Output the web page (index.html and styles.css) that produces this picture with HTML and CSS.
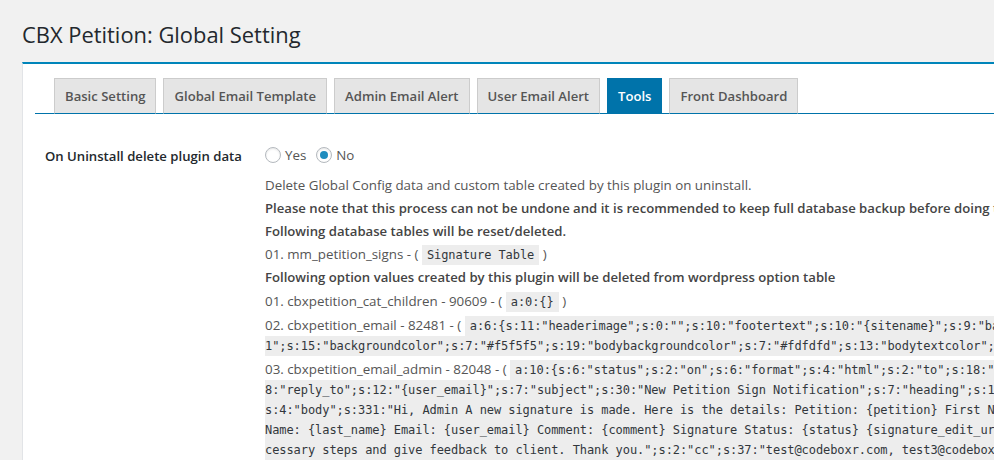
FILE: index.html
```html
<!DOCTYPE html>
<html>
<head>
<meta charset="utf-8">
<title>CBX Petition: Global Setting</title>
<link rel="stylesheet" href="styles.css">
</head>
<body>
<div class="wrap">
  <h1 class="page-title">CBX Petition: Global Setting</h1>
  <div class="panel">
    <nav class="tabs">
      <a class="tab">Basic Setting</a>
      <a class="tab">Global Email Template</a>
      <a class="tab">Admin Email Alert</a>
      <a class="tab">User Email Alert</a>
      <a class="tab active">Tools</a>
      <a class="tab">Front Dashboard</a>
    </nav>
    <div class="form-row">
      <div class="label">On Uninstall delete plugin data</div>
      <div class="field">
        <div class="radios">
          <label class="radio"><span class="dot"></span>Yes</label>
          <label class="radio"><span class="dot checked"></span>No</label>
        </div>
        <div class="desc">
          <p class="first">Delete Global Config data and custom table created by this plugin on uninstall.</p>
          <p class="strong">Please note that this process can not be undone and it is recommended to keep full database backup before doing this.</p>
          <p class="strong">Following database tables will be reset/deleted.</p>
          <p>01. mm_petition_signs - ( <code>Signature Table</code> )</p>
          <p class="strong">Following option values created by this plugin will be deleted from wordpress option table</p>
          <p class="opt">01. cbxpetition_cat_children - 90609 - ( <code>a:0:{}</code> )</p>
          <p class="opt">02. cbxpetition_email - 82481 - ( <code>a:6:{s:11:"headerimage";s:0:"";s:10:"footertext";s:10:"{sitename}";s:9:"basecolor";s:7:"#557da<br>1";s:15:"backgroundcolor";s:7:"#f5f5f5";s:19:"bodybackgroundcolor";s:7:"#fdfdfd";s:13:"bodytextcolor";s:7:"#505050";}</code> )</p>
          <p class="opt">03. cbxpetition_email_admin - 82048 - ( <code>a:10:{s:6:"status";s:2:"on";s:6:"format";s:4:"html";s:2:"to";s:18:"admin@codeboxr.com";s:1<br>8:"reply_to";s:12:"{user_email}";s:7:"subject";s:30:"New Petition Sign Notification";s:7:"heading";s:19:"New Petition Signed";<br>s:4:"body";s:331:"Hi, Admin A new signature is made. Here is the details: Petition: {petition} First Name: {first_name} Last<br>Name: {last_name} Email: {user_email} Comment: {comment} Signature Status: {status} {signature_edit_url} Please take ne<br>cessary steps and give feedback to client. Thank you.";s:2:"cc";s:37:"test@codeboxr.com, test3@codeboxr.com";s:3:"bcc";s:0:"";}</code> )</p>
        </div>
      </div>
    </div>
  </div>
</div>
</body>
</html>
```

FILE: styles.css
```css
html, body {
  margin: 0;
  padding: 0;
}
body {
  background: #f1f1f1;
  font-family: "Open Sans", "Noto Sans", sans-serif;
  color: #444;
  overflow: hidden;
  width: 994px;
  height: 460px;
}
.wrap {
  width: 1400px;
  padding-left: 22px;
}
.page-title {
  margin: 20px 0 12px;
  font-size: 21.9px;
  font-weight: 400;
  line-height: 30px;
  color: #23282d;
}
.panel {
  background: #fff;
  border-top: 2px solid #0085ba;
  border-left: 1px solid #e2e4e7;
  padding: 14px 0 20px 12px;
}
.tabs {
  display: flex;
  gap: 7px;
  padding-left: 19px;
  border-bottom: 1px solid #0073aa;
  width: 1200px;
}
.tab {
  display: block;
  padding: 5px 10px;
  margin-bottom: -1px;
  font-size: 13.1px;
  font-weight: 600;
  line-height: 24px;
  color: #555;
  background: #e5e5e5;
  border: 1px solid #ccc;
  border-bottom-color: #0073aa;
}
.tab.active {
  background: #0073aa;
  border-color: #0073aa;
  color: #fff;
}
.form-row {
  display: grid;
  grid-template-columns: 220px 1fr;
  padding-left: 10px;
  margin-top: 31px;
}
.label {
  font-size: 13.15px;
  font-weight: 600;
  line-height: 20px;
  color: #23282d;
  padding-top: 1px;
}
.radios {
  display: flex;
  gap: 10px;
  font-size: 13.35px;
  line-height: 20px;
  color: #555;
}
.radio {
  display: flex;
  align-items: center;
  gap: 4px;
}
.dot {
  width: 16px;
  height: 16px;
  box-sizing: border-box;
  border-radius: 50%;
  border: 1px solid #b4b9be;
  box-shadow: inset 0 1px 2px rgba(0, 0, 0, 0.1);
  display: flex;
  align-items: center;
  justify-content: center;
}
.dot.checked::after {
  content: "";
  width: 8px;
  height: 8px;
  border-radius: 50%;
  background: #1e8cbe;
}
.desc {
  margin-top: 10px;
  font-size: 13.35px;
  line-height: 20px;
  color: #555;
  white-space: nowrap;
}
.desc p {
  margin: 3px 0 0;
}
.desc p.first {
  margin-top: 0;
}
.desc p.opt {
  margin-top: 4px;
}
.desc p.strong {
  font-size: 13.15px;
  font-weight: 600;
  color: #444;
}
code {
  font-family: "DejaVu Sans Mono", monospace;
  font-size: 12px;
  line-height: 14px;
  letter-spacing: -0.07px;
  padding: 3px 5px 3px;
  background: rgba(0, 0, 0, 0.07);
  color: #32373c;
}
```
